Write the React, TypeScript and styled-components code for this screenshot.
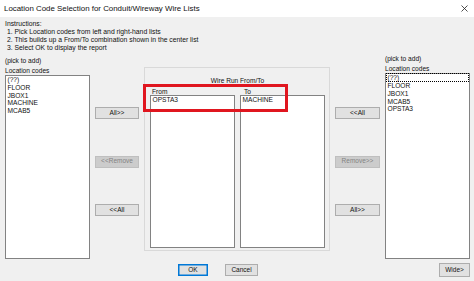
import React from "react";
import styled, { createGlobalStyle, css } from "styled-components";

const Global = createGlobalStyle`
  html, body { margin: 0; padding: 0; background: #f0f0f0; }
  body { font-family: "Liberation Sans", Arial, sans-serif; color: #000; }
  #root { width: 474px; height: 281px; overflow: hidden; }
`;

const Window = styled.div`
  width: 474px;
  height: 281px;
  display: flex;
  flex-direction: column;
  background: #f0f0f0;
  position: relative;
`;

const TitleBar = styled.div`
  height: 17px;
  flex: none;
  background: #ffffff;
  display: flex;
  align-items: center;
  justify-content: space-between;
  padding: 0 6px 0 4px;
  font-size: 7.9px;
  color: #111;
`;

const CloseIcon = () => (
  <svg width="7" height="7" viewBox="0 0 7 7">
    <path d="M0.5 0.5 L6.5 6.5 M6.5 0.5 L0.5 6.5" stroke="#222" strokeWidth="0.8" fill="none" />
  </svg>
);

const Instructions = styled.div`
  padding: 3px 0 0 5px;
  font-size: 6.8px;
  line-height: 8px;
  height: 36px;
  color: #111;
`;

const Step = styled.div`
  padding-left: 2px;
`;

const Main = styled.div`
  display: grid;
  grid-template-columns: 85px 44px 186px 45px 85px;
  grid-template-rows: 203px 22px;
  column-gap: 5px;
  padding-left: 5px;
  font-size: 6.6px;
  color: #111;
`;

const SideColumn = styled.div<{ $lift?: number }>`
  display: flex;
  flex-direction: column;
  margin-top: ${(p) => -(p.$lift || 0)}px;
`;

const Caption = styled.div`
  line-height: 9px;
  height: 9.5px;
  white-space: nowrap;
`;

const ListBox = styled.div`
  background: #ffffff;
  border: 1px solid #828282;
  flex: 1;
  display: flex;
  flex-direction: column;
  min-height: 0;
`;

const Item = styled.div<{ $focused?: boolean }>`
  line-height: 7.8px;
  height: 7.8px;
  padding-left: 1.5px;
  white-space: nowrap;
  ${(p) =>
    p.$focused &&
    css`
      outline: 1px dotted #000;
      outline-offset: -1px;
      height: 9px;
      line-height: 9px;
      margin-top: -1px;
    `}
`;

const ButtonColumn = styled.div`
  display: flex;
  flex-direction: column;
  gap: 36.5px;
  padding-top: 51px;
`;

const Button = styled.button<{ $default?: boolean; $w?: number; $h?: number }>`
  font-family: "Liberation Sans", Arial, sans-serif;
  font-size: 6.5px;
  color: #111;
  background: #e1e1e1;
  border: 1px solid #adadad;
  height: ${(p) => p.$h || 12}px;
  width: ${(p) => (p.$w ? p.$w + "px" : "100%")};
  padding: 0;
  margin: 0;
  line-height: 1;
  display: flex;
  align-items: center;
  justify-content: center;
  white-space: nowrap;
  ${(p) =>
    p.$default &&
    css`
      border: 1px solid #0078d7;
      box-shadow: inset 0 0 0 0.5px #0078d7;
    `}
  &:disabled {
    background: #cccccc;
    border-color: #bfbfbf;
    color: #838383;
  }
`;

const Group = styled.div`
  margin-top: 11px;
  height: 184px;
  border: 1px solid #d9d9d9;
  box-sizing: border-box;
  display: flex;
  flex-direction: column;
  padding: 8px 4px 2px 5px;
  position: relative;
`;

const GroupTitle = styled.div`
  text-align: center;
  line-height: 9px;
  height: 9px;
`;

const Pair = styled.div`
  flex: 1;
  display: grid;
  grid-template-columns: 85px 85px;
  column-gap: 5px;
  min-height: 0;
`;

const PairCol = styled.div`
  display: flex;
  flex-direction: column;
  min-height: 0;
`;

const PairLabel = styled.div<{ $indent?: number }>`
  box-sizing: border-box;
  height: 10px;
  line-height: 8px;
  padding-top: 2.5px;
  padding-left: ${(p) => p.$indent || 2}px;
`;

const Highlight = styled.div`
  position: absolute;
  left: -2px;
  top: 16px;
  width: 145px;
  height: 28px;
  border: 3px solid #e0161f;
  box-sizing: border-box;
  pointer-events: none;
`;

const BottomCell = styled.div<{ $align: "start" | "end" }>`
  display: flex;
  align-items: flex-start;
  justify-content: ${(p) => (p.$align === "end" ? "flex-end" : "flex-start")};
  gap: 17px;
  padding-top: ${(p) => (p.$align === "end" ? 4 : 5)}px;
  padding-left: ${(p) => (p.$align === "end" ? 0 : 34)}px;
`;

const leftItems = ["(??)", "FLOOR", "JBOX1", "MACHINE", "MCAB5"];
const rightItems = ["(??)", "FLOOR", "JBOX1", "MCAB5", "OPSTA3"];

export default function App() {
  return (
    <>
      <Global />
      <Window>
        <TitleBar>
          <span>Location Code Selection for Conduit/Wireway Wire Lists</span>
          <CloseIcon />
        </TitleBar>
        <Instructions>
          <div>Instructions:</div>
          <Step>1. Pick Location codes from left and right-hand lists</Step>
          <Step>2. This builds up a From/To combination shown in the center list</Step>
          <Step>3. Select OK to display the report</Step>
        </Instructions>
        <Main>
          <SideColumn>
            <Caption>(pick to add)</Caption>
            <Caption>Location codes</Caption>
            <ListBox>
              {leftItems.map((t) => (
                <Item key={t}>{t}</Item>
              ))}
            </ListBox>
          </SideColumn>
          <ButtonColumn>
            <Button>All&gt;&gt;</Button>
            <Button disabled>&lt;&lt;Remove</Button>
            <Button>&lt;&lt;All</Button>
          </ButtonColumn>
          <Group>
            <GroupTitle>Wire Run From/To</GroupTitle>
            <Pair>
              <PairCol>
                <PairLabel>From</PairLabel>
                <ListBox>
                  <Item>OPSTA3</Item>
                </ListBox>
              </PairCol>
              <PairCol>
                <PairLabel $indent={4}>To</PairLabel>
                <ListBox>
                  <Item>MACHINE</Item>
                </ListBox>
              </PairCol>
            </Pair>
            <Highlight />
          </Group>
          <ButtonColumn>
            <Button>&lt;&lt;All</Button>
            <Button disabled>Remove&gt;&gt;</Button>
            <Button>All&gt;&gt;</Button>
          </ButtonColumn>
          <SideColumn $lift={2}>
            <Caption>(pick to add)</Caption>
            <Caption>Location codes</Caption>
            <ListBox>
              {rightItems.map((t, i) => (
                <Item key={t} $focused={i === 0}>
                  {t}
                </Item>
              ))}
            </ListBox>
          </SideColumn>
          <div />
          <div />
          <BottomCell $align="start">
            <Button $default $w={30}>OK</Button>
            <Button $w={33}>Cancel</Button>
          </BottomCell>
          <div />
          <BottomCell $align="end">
            <Button $w={31} $h={14}>Wide&gt;</Button>
          </BottomCell>
        </Main>
      </Window>
    </>
  );
}
